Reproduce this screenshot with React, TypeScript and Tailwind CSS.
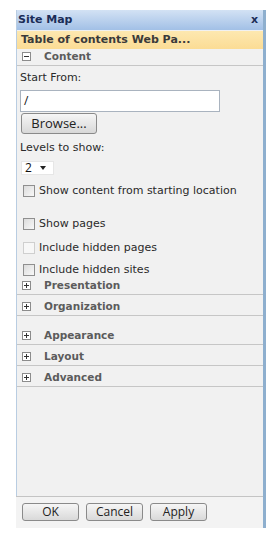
import React from "react";

const verdana = "font-['DejaVu_Sans',Verdana,sans-serif]";
const segoe = "font-['Open_Sans','Liberation_Sans',sans-serif]";

function ToggleBox({ open }: { open?: boolean }) {
  return (
    <span className="w-[9px] h-[9px] border border-[#8c8c8c] bg-white flex items-center justify-center relative shrink-0">
      <span className="absolute w-[5px] h-[1px] bg-[#333]" />
      {!open && <span className="absolute w-[1px] h-[5px] bg-[#333]" />}
    </span>
  );
}

function SectionHeader({ label, open, mt }: { label: string; open?: boolean; mt: string }) {
  return (
    <div className={`${mt} h-[17px] border-b border-[#c6c6c6] flex items-center pl-[5px] pb-[1px]`}>
      <ToggleBox open={open} />
      <span className={`ml-[13px] text-[10.5px] font-bold text-[#5c5c5c] ${verdana}`}>{label}</span>
    </div>
  );
}

function Check({ label, mt, disabled }: { label: string; mt: string; disabled?: boolean }) {
  return (
    <div className={`${mt} h-[16px] flex items-center pl-[6px]`}>
      <span
        className={`w-[12px] h-[12px] border ${
          disabled ? "border-[#cfcfcf] bg-[#f7f7f7]" : "border-[#8f8f8f] bg-gradient-to-br from-[#dcdcdc] to-[#f8f8f8]"
        } shrink-0`}
      />
      <span className={`ml-[4px] text-[11px] text-[#2a2a2a] ${verdana}`}>{label}</span>
    </div>
  );
}

function Button({ label }: { label: string }) {
  return (
    <button className={`w-[57px] h-[18px] border border-[#8a8a8a] rounded-[3px] bg-gradient-to-b from-[#f6f6f6] to-[#d9d9d9] text-[12px] leading-none text-[#222] ${segoe}`}>
      {label}
    </button>
  );
}

export default function App() {
  return (
    <div className="w-[273px] h-[537px] bg-white overflow-hidden">
      <div className="ml-4 mt-[10px] w-[250px] border-r-[3px] border-[#8eafce] flex flex-col">
        {/* main pane */}
        <div className="h-[486px] border-l border-[#b9cde2] bg-[#f1f1f1] flex flex-col">
          <div className="h-[20px] bg-gradient-to-b from-[#d3e2f4] to-[#a2c0e6] flex items-center justify-between pl-[1px] pr-[5px]">
            <span className={`text-[11px] font-bold text-[#1b2d57] ${verdana}`}>Site Map</span>
            <span className={`text-[11px] font-bold text-[#1b2d57] ${verdana}`}>x</span>
          </div>
          <div className="mt-[1px] h-[18px] bg-gradient-to-b from-[#fde8b0] to-[#fbdc95] flex items-center pl-[4px]">
            <span className={`text-[11px] font-bold text-[#3a3a3a] ${verdana}`}>Table of contents Web Pa...</span>
          </div>
          <SectionHeader label="Content" open mt="mt-0" />

          <div className="pl-[3px] flex flex-col">
            <div className={`mt-[5px] h-[13px] leading-[13px] text-[11px] text-[#2a2a2a] ${verdana}`}>Start From:</div>
            <div className="mt-[6px] w-[200px] h-[22px] border border-[#a9b3bf] bg-white flex items-center pl-[3px]">
              <span className={`text-[12px] text-[#111] ${segoe}`}>/</span>
            </div>
            <button className={`mt-[1px] ml-[1px] w-[76px] h-[21px] border border-[#8a8a8a] rounded-[3px] bg-gradient-to-b from-[#f6f6f6] to-[#d8d8d8] text-[13px] leading-none text-[#222] ${segoe}`}>
              Browse...
            </button>
            <div className={`mt-[7px] h-[13px] leading-[13px] text-[11px] text-[#2a2a2a] ${verdana}`}>Levels to show:</div>
            <div className="mt-[7px] ml-[1px] w-[33px] h-[14px] bg-white border border-[#e6e6e6] flex items-center pl-[3px] gap-[8px]">
              <span className={`text-[12px] leading-none text-[#111] ${segoe}`}>2</span>
              <span className="w-0 h-0 border-l-[3px] border-r-[3px] border-t-[4px] border-l-transparent border-r-transparent border-t-[#222]" />
            </div>
          </div>

          <Check label="Show content from starting location" mt="mt-[8px]" />
          <Check label="Show pages" mt="mt-[17px]" />
          <Check label="Include hidden pages" mt="mt-[8px]" disabled />
          <Check label="Include hidden sites" mt="mt-[6px]" />

          <SectionHeader label="Presentation" mt="mt-0" />
          <SectionHeader label="Organization" mt="mt-[4px]" />
          <SectionHeader label="Appearance" mt="mt-[12px]" />
          <SectionHeader label="Layout" mt="mt-[4px]" />
          <SectionHeader label="Advanced" mt="mt-[4px]" />
        </div>

        {/* footer */}
        <div className="h-[32px] border-t border-[#c4c4c4] bg-[#f3f3f3] flex items-start gap-[7px] pl-[6px] pt-[6px]">
          <Button label="OK" />
          <Button label="Cancel" />
          <Button label="Apply" />
        </div>
      </div>
    </div>
  );
}
